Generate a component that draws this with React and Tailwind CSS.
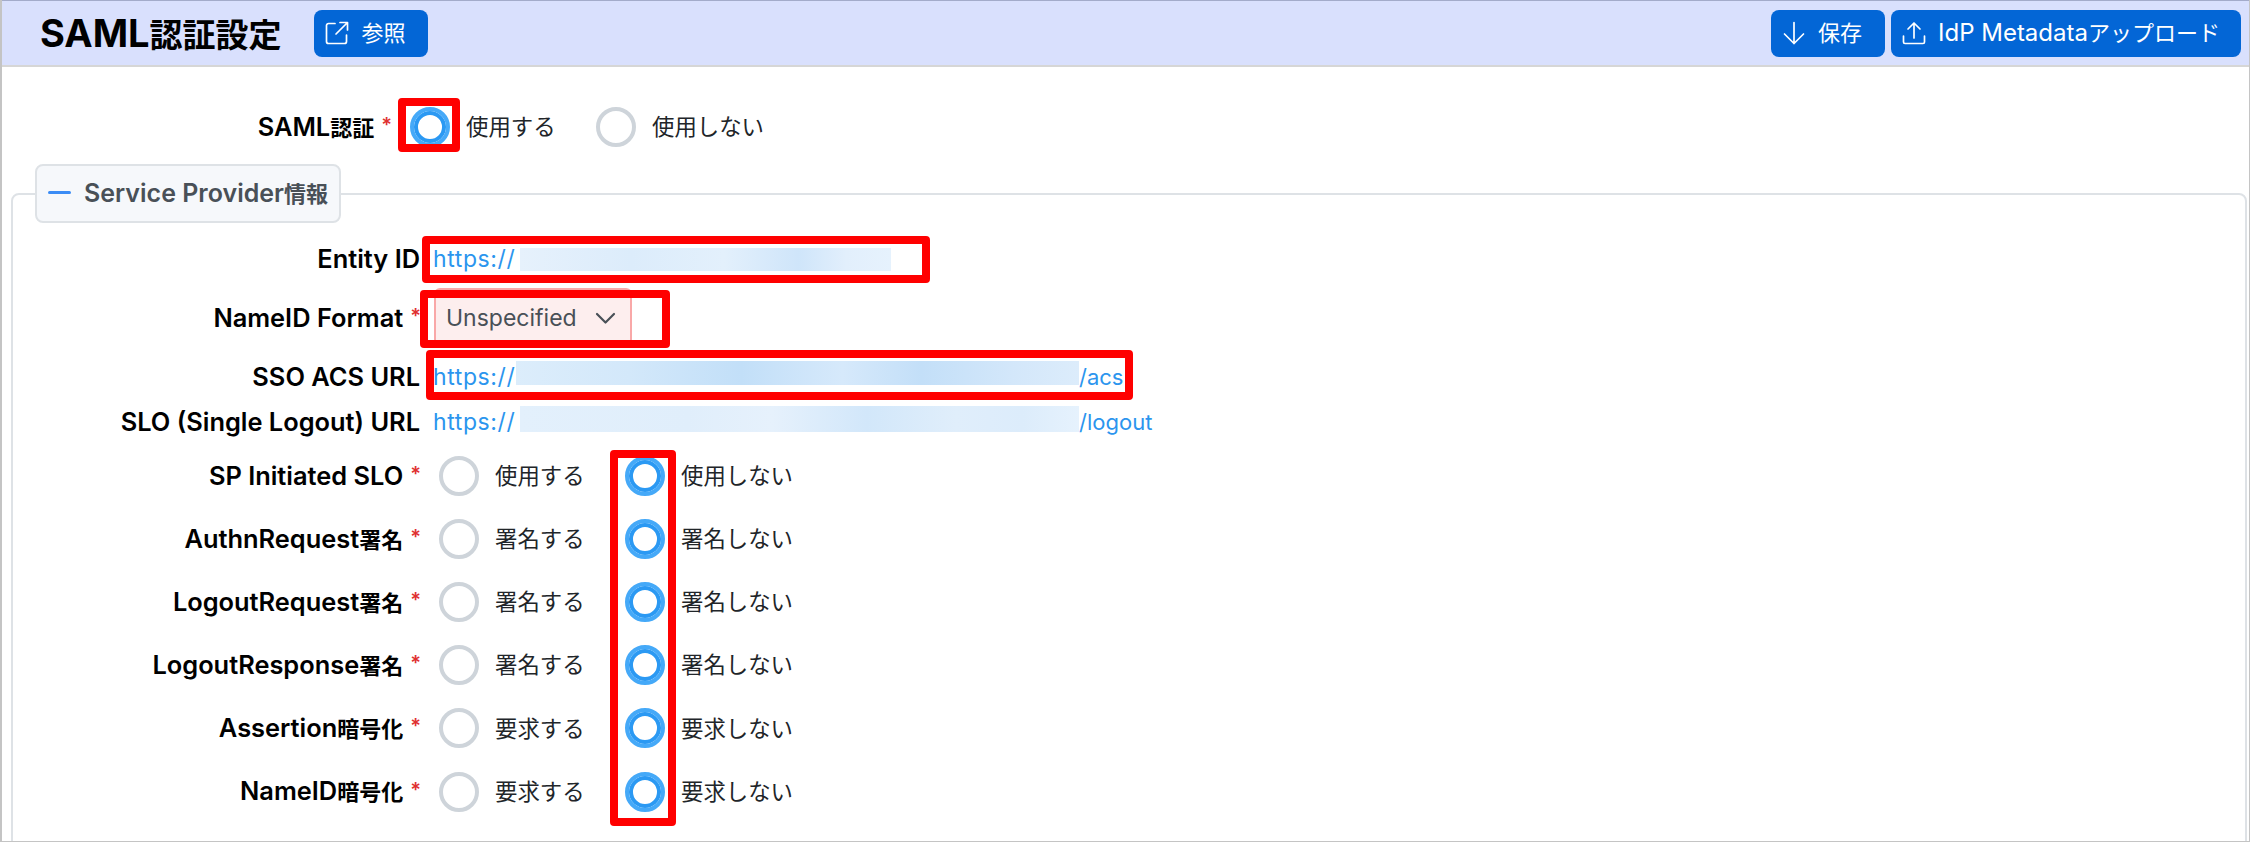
const font = { fontFamily: 'Inter, "Noto Sans CJK JP", sans-serif' };

// latin and japanese runs have different sizes in the reference
function Mixed({ text, cjk }) {
  return text.split(/([^\x00-\x7f]+)/).map((part, i) =>
    i % 2 ? (
      <span key={i} className={cjk}>
        {part}
      </span>
    ) : (
      part
    )
  );
}

function OpenIcon() {
  return (
    <svg width="24" height="24" viewBox="0 0 24 24" fill="none" stroke="currentColor" strokeWidth="1.7" strokeLinecap="round" strokeLinejoin="round">
      <path d="M10 2.5H3.5a2 2 0 0 0-2 2v16a2 2 0 0 0 2 2h16a2 2 0 0 0 2-2V14" />
      <path d="M11 13L22 2M15 1.5h7.5V9" />
    </svg>
  );
}

function DownIcon() {
  return (
    <svg width="24" height="24" viewBox="0 0 24 24" fill="none" stroke="currentColor" strokeWidth="1.7" strokeLinecap="round" strokeLinejoin="round">
      <path d="M12 1.5v21M2.5 13l9.5 9.5 9.5-9.5" />
    </svg>
  );
}

function UploadIcon() {
  return (
    <svg width="24" height="24" viewBox="0 0 24 24" fill="none" stroke="currentColor" strokeWidth="1.7" strokeLinecap="round" strokeLinejoin="round">
      <path d="M12 17V2M6 8l6-6 6 6" />
      <path d="M1.5 15v6a1.5 1.5 0 0 0 1.5 1.5h18a1.5 1.5 0 0 0 1.5-1.5v-6" />
    </svg>
  );
}

function ChevronIcon() {
  return (
    <svg width="21" height="13" viewBox="0 0 21 13" fill="none" stroke="#495057" strokeWidth="2.2" strokeLinecap="round" strokeLinejoin="round">
      <path d="M2 2l8.5 8.5L19 2" />
    </svg>
  );
}

function HeadButton({ icon, children, className }) {
  return (
    <button className={`h-[47px] flex items-center rounded-lg bg-[#0366d6] text-white text-[24px] ${className}`}>
      {icon}
      <span>
        <Mixed text={children} cjk="text-[22px]" />
      </span>
    </button>
  );
}

function Radio({ checked }) {
  return (
    <span
      className={`block w-10 h-10 shrink-0 rounded-full bg-white ${
        checked
          ? "border-[4px] border-[#45a9f8] shadow-[inset_0_0_0_4px_#2b99f3]"
          : "border-[4px] border-[#ced4da]"
      }`}
    />
  );
}

function Required() {
  return <span className="ml-[6px] text-[#e03131] text-[20px] font-semibold leading-none -translate-y-[2px] translate-x-px">*</span>;
}

function Label({ children, required, width = "w-[407px]" }) {
  return (
    <div className={`${width} shrink-0 flex justify-end items-center text-[25.4px] font-semibold text-black`}>
      <span>
        <Mixed text={children} cjk="text-[22px]" />
      </span>
      {required && <Required />}
    </div>
  );
}

function RadioRow({ label, on, off }) {
  return (
    <div className="h-[63.2px] flex items-center">
      <Label required>{label}</Label>
      <div className="ml-[19px] flex items-center text-[22.4px] text-[#212529]">
        <Radio />
        <span className="ml-[16px] w-[130px]">{on}</span>
        <Radio checked />
        <span className="ml-[16px]">{off}</span>
      </div>
    </div>
  );
}

function LinkRow({ label, spaced, blur, tail }) {
  return (
    <div className="flex items-center h-[46px]">
      <Label>{label}</Label>
      <a className="ml-[13px] flex items-center text-[#2b95ee]">
        <span className={`text-[23px] tracking-[0.6px] shrink-0 ${spaced ? "w-[87px]" : "w-[83px]"}`}>https://</span>
        <span className={`block shrink-0 ${blur}`} />
        <span className="text-[22px]">{tail}</span>
      </a>
    </div>
  );
}

function Mark({ className }) {
  return <div className={`absolute border-[8px] border-[#ff0000] rounded-[4px] ${className}`} />;
}

export default function App() {
  return (
    <div style={font} className="relative w-[2250px] h-[842px] overflow-hidden bg-white border-l-2 border-r border-b border-[#c4c4c4]">
      <header className="h-[67px] flex items-center justify-between pl-[38px] pr-[8px] bg-[#d9e0fd] border-t border-t-[#a3abca] border-b-2 border-b-[#d6d6d6]">
        <div className="flex items-center">
          <h1 className="text-[38px] font-bold text-black">
            <Mixed text="SAML認証設定" cjk="text-[33px]" />
          </h1>
          <HeadButton icon={<OpenIcon />} className="ml-[32px] w-[114px] pl-[11px] gap-[13px]">参照</HeadButton>
        </div>
        <div className="flex items-center gap-[6px]">
          <HeadButton icon={<DownIcon />} className="w-[114px] pl-[11px] gap-[12px]">保存</HeadButton>
          <HeadButton icon={<UploadIcon />} className="w-[350px] pl-[11px] gap-[12px]">IdP Metadataアップロード</HeadButton>
        </div>
      </header>

      <div className="flex items-center h-[80px] mt-[20px]">
        <Label required width="w-[389px]">SAML認証</Label>
        <div className="ml-[19px] flex items-center text-[22.4px] text-[#212529]">
          <Radio checked />
          <span className="ml-[16px] w-[130px]">使用する</span>
          <Radio />
          <span className="ml-[16px]">使用しない</span>
        </div>
      </div>

      <fieldset className="ml-[9px] mr-[2px] h-[700px] mt-[-3px] pt-[13px] border-2 border-[#dee2e6] rounded-lg">
        <legend className="ml-[22px] w-[306px] h-[59px] flex items-center pl-[11px] gap-[13px] bg-[#f6f8fb] border-2 border-[#dee2e6] rounded-lg text-[25px] font-semibold text-[#495057]">
          <span className="block w-[23px] h-[3px] bg-[#3b8cf5] rounded-full -translate-y-px" />
          <span>
            <Mixed text="Service Provider情報" cjk="text-[22px]" />
          </span>
        </legend>

        <LinkRow
          label="Entity ID"
          spaced
          blur="w-[371px] h-[23px] bg-[linear-gradient(90deg,#e6f1fc_0%,#dcecfb_30%,#e3f0fc_55%,#cfe5fa_75%,#e2effc_88%,#e6f2fd_100%)]"
        />
        <div className="flex items-center h-[60px] mt-[6px]">
          <Label required>NameID Format</Label>
          <div className="ml-[14px] w-[198px] h-[60px] flex items-center justify-between pl-[10px] pr-[14px] bg-[#fdeeee] border-2 border-[#f9a8a8] rounded-md text-[23px] text-[#495057]">
            Unspecified
            <ChevronIcon />
          </div>
        </div>
        <div className="mt-[6px]">
          <LinkRow
            label="SSO ACS URL"
            blur="w-[563px] h-[24px] -translate-y-1 bg-[linear-gradient(90deg,#dcedfb_0%,#d3e8fa_20%,#c2dff8_40%,#d6e9fb_58%,#c3dff8_72%,#d3e7fa_88%,#dcecfb_100%)]"
            tail="/acs"
          />
        </div>
        <div className="-mt-px">
          <LinkRow
            label="SLO (Single Logout) URL"
            spaced
            blur="w-[559px] h-[26px] -translate-y-[3px] bg-[linear-gradient(90deg,#e3f0fc_0%,#e0eefb_30%,#e6f1fc_45%,#d2e7fa_62%,#e0eefb_78%,#dcecfb_90%,#e6f2fd_100%)]"
            tail="/logout"
          />
        </div>
        <div className="-mt-px">
          <RadioRow label="SP Initiated SLO" on="使用する" off="使用しない" />
          <RadioRow label="AuthnRequest署名" on="署名する" off="署名しない" />
          <RadioRow label="LogoutRequest署名" on="署名する" off="署名しない" />
          <RadioRow label="LogoutResponse署名" on="署名する" off="署名しない" />
          <RadioRow label="Assertion暗号化" on="要求する" off="要求しない" />
          <RadioRow label="NameID暗号化" on="要求する" off="要求しない" />
        </div>
      </fieldset>

      <Mark className="left-[396px] top-[98px] w-[62px] h-[54px]" />
      <Mark className="left-[420px] top-[236px] w-[508px] h-[47px]" />
      <Mark className="left-[418px] top-[290px] w-[250px] h-[58px]" />
      <Mark className="left-[424px] top-[350px] w-[707px] h-[50px]" />
      <Mark className="left-[608px] top-[450px] w-[66px] h-[376px]" />
    </div>
  );
}
